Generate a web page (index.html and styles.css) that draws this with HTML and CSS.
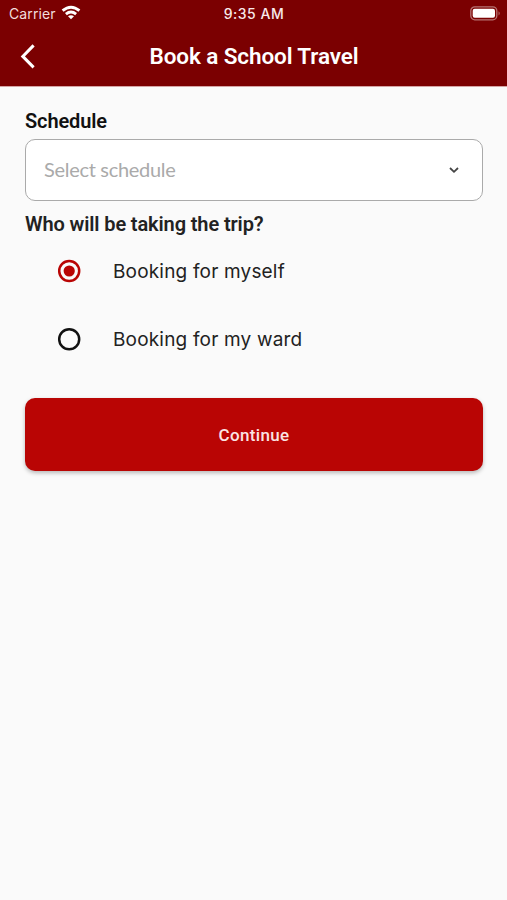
FILE: index.html
```html
<!DOCTYPE html>
<html lang="en">
<head>
<meta charset="utf-8">
<title>Book a School Travel</title>
<link rel="stylesheet" href="styles.css">
</head>
<body>
<header class="top">
  <div class="status">
    <div class="carrier"><span>Carrier</span>
      <svg class="wifi" width="20" height="15" viewBox="0 0 20 15" fill="none" stroke="#fff" stroke-width="2.9"><path d="M1.6 5.7Q10-1.2 18.4 5.7M4.9 9.1Q10 5 15.1 9.1"/><path d="M7 11.2Q10 9.2 13 11.2L10 14.3Z" fill="#fff" stroke="none"/></svg>
    </div>
    <span class="time">9:35 AM</span>
    <svg class="battery" width="31" height="15" viewBox="0 0 31 15"><rect x=".8" y=".8" width="26" height="13" rx="4" fill="none" stroke="#fff" stroke-opacity=".45" stroke-width="1.3"/><rect x="2.7" y="2.8" width="22.3" height="9" rx="2" fill="#fff"/><path d="M28.6 5.2Q30.6 7.3 28.6 9.4Z" fill="#fff" fill-opacity=".5"/></svg>
  </div>
  <div class="nav">
    <svg class="back" width="16" height="26" viewBox="0 0 16 26" fill="none" stroke="#fff" stroke-width="3"><path d="M13.6 1.4L2.8 12.4L13.6 23.4"/></svg>
    <h1>Book a School Travel</h1>
  </div>
</header>
<main>
  <h2 class="label">Schedule</h2>
  <div class="select"><span>Select schedule</span>
    <svg width="10" height="8" viewBox="0 0 10 8" fill="none" stroke="#444" stroke-width="1.8"><path d="M1 2L5 5.8L9 2"/></svg>
  </div>
  <h2 class="label who">Who will be taking the trip?</h2>
  <div class="option">
    <svg width="24" height="24" viewBox="0 0 24 24"><circle cx="12.2" cy="12" r="10" fill="none" stroke="#b90504" stroke-width="2.5"/><circle cx="12.2" cy="12" r="5.6" fill="#b90504"/></svg>
    <span>Booking for myself</span>
  </div>
  <div class="option">
    <svg width="24" height="24" viewBox="0 0 24 24"><circle cx="12.2" cy="12.3" r="10" fill="none" stroke="#111" stroke-width="2.5"/></svg>
    <span>Booking for my ward</span>
  </div>
  <button type="button">Continue</button>
</main>
</body>
</html>
```
FILE: styles.css
```css
* { box-sizing: border-box; }
body { margin: 0; min-height: 900px; background: #fafafa; color: #111; font-family: Inter, sans-serif; }
.top { height: 86px; background: #7b0001; color: #fff; box-shadow: 0 1px 0 #d5a5a5; }
.status { height: 27px; padding: 0 6px 0 9px; display: grid; grid-template-columns: 1fr auto 1fr; align-items: center; font-size: 14px; }
.carrier { display: flex; align-items: center; gap: 5px; color: #f2dddd; letter-spacing: .1px; }
.wifi { margin-top: -3px; }
.time { margin-right: 2px; color: #f8eaea; font-weight: 500; font-size: 14px; letter-spacing: .5px; }
.battery { justify-self: end; }
.nav { height: 59px; padding: 0 19px 0 20px; display: grid; grid-template-columns: 16px 1fr 16px; align-items: center; }
h1 { margin: -1px 0 0; text-align: center; font: 600 22.5px/30px Roboto, sans-serif; letter-spacing: -.1px; }
main { padding: 22px 25px 0; }
.label { margin: 0; font: 600 20px/26px Roboto, sans-serif; letter-spacing: -.12px; white-space: nowrap; }
.select { width: 458px; height: 62px; margin: 5px 0 10px; padding: 0 23px 2px 18px; display: flex; align-items: center; justify-content: space-between; border: 1.4px solid #aaa; border-radius: 10px; background: #fff; color: #aaa; font: 20px Lato, sans-serif; letter-spacing: -.3px; }
.select svg { margin-top: 2px; }
.who { color: #222; }
.option { height: 68px; padding: 0 32px; display: flex; align-items: center; gap: 32px; font-size: 19px; letter-spacing: .18px; color: #222; white-space: nowrap; }
button { display: block; width: 458px; height: 73px; margin-top: 25px; border: 0; border-radius: 10px; background: #b90504; color: #fbe3e3; font: 500 17px Roboto, sans-serif; letter-spacing: .35px; box-shadow: 0 2px 4px #0004; }
```
